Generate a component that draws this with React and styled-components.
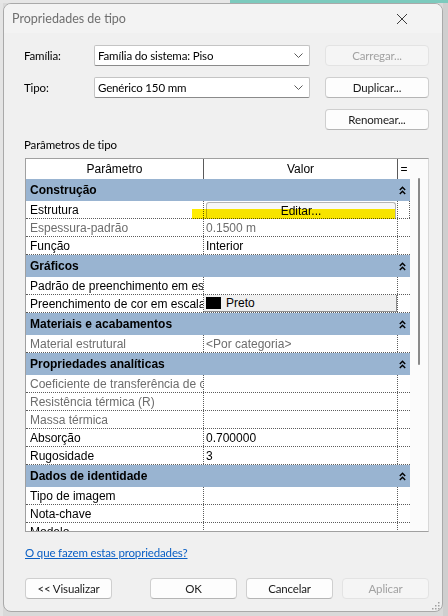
import React from 'react'
import styled, { createGlobalStyle } from 'styled-components'

const GlobalStyle = createGlobalStyle`
  html, body {
    margin: 0;
    padding: 0;
    overflow: hidden;
  }
  body {
    background: #dcdcdc;
  }
`

const UI = `"Lato", "Roboto", "Liberation Sans", sans-serif`
const GRID = `"Liberation Sans", Arial, sans-serif`

let Backdrop = styled.div`
  width: 448px;
  height: 616px;
  box-sizing: border-box;
  padding: 3px 5px 0 3px;
  background:
    linear-gradient(to right, #e6e6e6 230px, #7ccabd 230px) top left / 100% 3px no-repeat,
    linear-gradient(to right, #e4e4e4 3px, transparent 3px),
    linear-gradient(to left, #cfcfcf 5px, transparent 5px),
    #d9d9d9;
`

let Dialog = styled.div`
  width: 440px;
  height: 609px;
  box-sizing: border-box;
  border: 1px solid #a9a9a9;
  border-radius: 8px;
  background: #f0f0f0;
  display: flex;
  flex-direction: column;
  position: relative;
  overflow: hidden;
  font-family: ${UI};
  font-size: 11.5px;
  letter-spacing: -0.15px;
  color: #1a1a1a;
`

let TitleBar = styled.div`
  height: 29px;
  flex: none;
  display: flex;
  align-items: center;
  justify-content: space-between;
  padding: 0 34px 0 8px;
  background: #f3f3f3;
`

let TitleText = styled.span`
  font-size: 12.5px;
  letter-spacing: 0;
  color: #6f6f6f;
`

let CloseIcon = styled.svg`
  width: 12px;
  height: 12px;
  display: block;
`

let Body = styled.div`
  flex: 1;
  display: flex;
  flex-direction: column;
  padding: 12px 13px 12px 20px;
`

let FormGrid = styled.div`
  display: grid;
  grid-template-columns: 70px 231px 104px;
  grid-auto-rows: 21px;
  row-gap: 11px;
  align-items: center;
`

let Label = styled.span`
  color: #000;
`

let Select = styled.div`
  height: 21px;
  margin-right: 15px;
  box-sizing: border-box;
  border: 1px solid #c4c4c4;
  border-bottom-color: #8a8a8a;
  border-radius: 2px;
  background: #fff;
  display: flex;
  align-items: center;
  justify-content: space-between;
  padding: 0 6px 0 3px;
  color: #000;
`

let Chevron = styled.svg`
  width: 9px;
  height: 5px;
  display: block;
`

let Button = styled.div`
  height: 21px;
  box-sizing: border-box;
  border: 1px solid ${p => (p.$disabled ? '#e3e3e3' : '#cfcfcf')};
  border-bottom-color: ${p => (p.$disabled ? '#e3e3e3' : '#b5b5b5')};
  border-radius: 4px;
  background: ${p => (p.$disabled ? '#f5f5f5' : '#fdfdfd')};
  color: ${p => (p.$disabled ? '#a2a2a2' : '#1a1a1a')};
  display: flex;
  align-items: center;
  justify-content: center;
  width: ${p => p.$w || 'auto'};
`

let Blank = styled.span``

let SectionLabel = styled.div`
  margin: 8px 0 6px;
  height: 14px;
  line-height: 14px;
  color: #000;
`

let Frame = styled.div`
  margin-left: 1px;
  width: 404px;
  height: 374px;
  flex: none;
  box-sizing: border-box;
  border: 1px solid #a0a0a0;
  border-right-color: #d8d8d8;
  display: flex;
  overflow: hidden;
  background: #fff;
`

let Grid = styled.div`
  width: 384px;
  flex: none;
  font-family: ${GRID};
  font-size: 12px;
  letter-spacing: 0;
  color: #000;
`

let ScrollArea = styled.div`
  flex: 1;
  background: #fbfbfb;
  position: relative;
`

let Thumb = styled.div`
  position: absolute;
  left: 8px;
  top: 19px;
  width: 2px;
  height: 187px;
  background: #8a8a8a;
  border-radius: 1px;
`

const COLS = '178px 194px 12px'

let HeaderRow = styled.div`
  display: grid;
  grid-template-columns: ${COLS};
  height: 20px;
  background: #fff;
`

let HeaderCell = styled.div`
  box-sizing: border-box;
  border-right: 1px solid #5a5a5a;
  display: flex;
  align-items: center;
  justify-content: center;
  &:last-child {
    border-right: none;
  }
`

let GroupRow = styled.div`
  display: grid;
  grid-template-columns: 372px 12px;
  height: 22px;
  background: #99b4d1;
  align-items: center;
  font-weight: bold;
`

let GroupTitle = styled.span`
  padding-left: 4px;
`

let Collapse = styled.svg`
  width: 7px;
  height: 9px;
  display: block;
  margin-left: 1px;
`

let DataRow = styled.div`
  display: grid;
  grid-template-columns: ${COLS};
  height: 18px;
  box-sizing: border-box;
  border-bottom: 1px dotted #5c5c5c;
  position: relative;
  color: ${p => (p.$dim ? '#6d6d6d' : '#000')};
`

let Cell = styled.div`
  box-sizing: border-box;
  border-right: 1px dotted #5c5c5c;
  padding-left: 4px;
  white-space: nowrap;
  overflow: hidden;
  display: flex;
  align-items: center;
  &:last-child {
    border-right: none;
  }
`

let ValueCell = styled(Cell)`
  padding-left: 2px;
`

let EditButton = styled.div`
  flex: 1;
  height: 16px;
  margin: 1px 1px 0 0;
  box-sizing: border-box;
  border: 1px solid #b4b4b4;
  border-bottom: none;
  border-radius: 3px 3px 0 0;
  background: #f7f7f7;
  display: flex;
  align-items: center;
  justify-content: center;
`

let ColorCell = styled.div`
  flex: 1;
  align-self: stretch;
  margin-left: -2px;
  box-sizing: border-box;
  border-right: 1px solid #8f8f8f;
  border-bottom: 1px solid #8f8f8f;
  background: #f0f0f0;
  display: flex;
  align-items: center;
  gap: 5px;
  padding-left: 2px;
`

let Swatch = styled.span`
  width: 15px;
  height: 12px;
  flex: none;
  background: #000;
  display: inline-block;
`

let Highlight = styled.div`
  position: absolute;
  left: 166px;
  top: 8px;
  width: 203px;
  height: 10px;
  background: #ffec00;
  mix-blend-mode: multiply;
  pointer-events: none;
`

let HelpLink = styled.a`
  margin-top: 13px;
  margin-left: 1px;
  height: 15px;
  line-height: 15px;
  color: #0a5fc4;
  text-decoration: underline;
  align-self: flex-start;
  cursor: pointer;
`

let Footer = styled.div`
  margin-top: 18px;
  margin-left: 1px;
  display: flex;
  align-items: center;
`

let FooterGroup = styled.div`
  margin-left: auto;
  display: flex;
  gap: 9px;
`

let Grip = styled.svg`
  position: absolute;
  right: 2px;
  bottom: 1px;
  width: 9px;
  height: 9px;
`

const groups = [
  {
    title: 'Construção',
    rows: [
      { p: 'Estrutura', kind: 'edit' },
      { p: 'Espessura-padrão', v: '0.1500 m', dim: true },
      { p: 'Função', v: 'Interior' },
    ],
  },
  {
    title: 'Gráficos',
    rows: [
      { p: 'Padrão de preenchimento em escala grosseira' },
      { p: 'Preenchimento de cor em escala grosseira', kind: 'color', v: 'Preto' },
    ],
  },
  {
    title: 'Materiais e acabamentos',
    rows: [{ p: 'Material estrutural', v: '<Por categoria>', dim: true }],
  },
  {
    title: 'Propriedades analíticas',
    rows: [
      { p: 'Coeficiente de transferência de calor (U)', dim: true },
      { p: 'Resistência térmica (R)', dim: true },
      { p: 'Massa térmica', dim: true },
      { p: 'Absorção', v: '0.700000' },
      { p: 'Rugosidade', v: '3' },
    ],
  },
  {
    title: 'Dados de identidade',
    rows: [
      { p: 'Tipo de imagem' },
      { p: 'Nota-chave' },
      { p: 'Modelo' },
      { p: 'Fabricante' },
    ],
  },
]

const DownChevron = () => (
  <Chevron viewBox="0 0 9 5">
    <path d="M0.5 0.5 L4.5 4.5 L8.5 0.5" fill="none" stroke="#5a5a5a" strokeWidth="1" />
  </Chevron>
)

const CollapseIcon = () => (
  <Collapse viewBox="0 0 7 9">
    <path d="M0.8 4 L3.5 1.2 L6.2 4 M0.8 8 L3.5 5.2 L6.2 8" fill="none" stroke="#000" strokeWidth="1.4" />
  </Collapse>
)

function Row({ row }) {
  let value = <ValueCell>{row.v}</ValueCell>
  if (row.kind === 'edit') {
    value = (
      <ValueCell>
        <EditButton>Editar...</EditButton>
      </ValueCell>
    )
  }
  if (row.kind === 'color') {
    value = (
      <ValueCell>
        <ColorCell>
          <Swatch />
          {row.v}
        </ColorCell>
      </ValueCell>
    )
  }
  return (
    <DataRow $dim={row.dim}>
      <Cell>{row.p}</Cell>
      {value}
      <Cell />
      {row.kind === 'edit' && <Highlight />}
    </DataRow>
  )
}

export default function App() {
  return (
    <Backdrop>
      <GlobalStyle />
      <Dialog>
        <TitleBar>
          <TitleText>Propriedades de tipo</TitleText>
          <CloseIcon viewBox="0 0 12 12">
            <path d="M1 1 L11 11 M11 1 L1 11" stroke="#3c3c3c" strokeWidth="1" />
          </CloseIcon>
        </TitleBar>
        <Body>
          <FormGrid>
            <Label>Família:</Label>
            <Select>
              Família do sistema: Piso
              <DownChevron />
            </Select>
            <Button $disabled>Carregar...</Button>

            <Label>Tipo:</Label>
            <Select>
              Genérico 150 mm
              <DownChevron />
            </Select>
            <Button>Duplicar...</Button>

            <Blank />
            <Blank />
            <Button>Renomear...</Button>
          </FormGrid>

          <SectionLabel>Parâmetros de tipo</SectionLabel>

          <Frame>
            <Grid>
              <HeaderRow>
                <HeaderCell>Parâmetro</HeaderCell>
                <HeaderCell>Valor</HeaderCell>
                <HeaderCell>=</HeaderCell>
              </HeaderRow>
              {groups.map(g => (
                <React.Fragment key={g.title}>
                  <GroupRow>
                    <GroupTitle>{g.title}</GroupTitle>
                    <CollapseIcon />
                  </GroupRow>
                  {g.rows.map(r => (
                    <Row key={r.p} row={r} />
                  ))}
                </React.Fragment>
              ))}
            </Grid>
            <ScrollArea>
              <Thumb />
            </ScrollArea>
          </Frame>

          <HelpLink>O que fazem estas propriedades?</HelpLink>

          <Footer>
            <Button $w="87px">&lt;&lt; Visualizar</Button>
            <FooterGroup>
              <Button $w="87px">OK</Button>
              <Button $w="87px">Cancelar</Button>
              <Button $w="87px" $disabled>Aplicar</Button>
            </FooterGroup>
          </Footer>
        </Body>
        <Grip viewBox="0 0 9 9">
          <g fill="#a0a0a0">
            <rect x="7" y="1" width="1.5" height="1.5" />
            <rect x="4" y="4" width="1.5" height="1.5" />
            <rect x="7" y="4" width="1.5" height="1.5" />
            <rect x="1" y="7" width="1.5" height="1.5" />
            <rect x="4" y="7" width="1.5" height="1.5" />
            <rect x="7" y="7" width="1.5" height="1.5" />
          </g>
        </Grip>
      </Dialog>
    </Backdrop>
  )
}
